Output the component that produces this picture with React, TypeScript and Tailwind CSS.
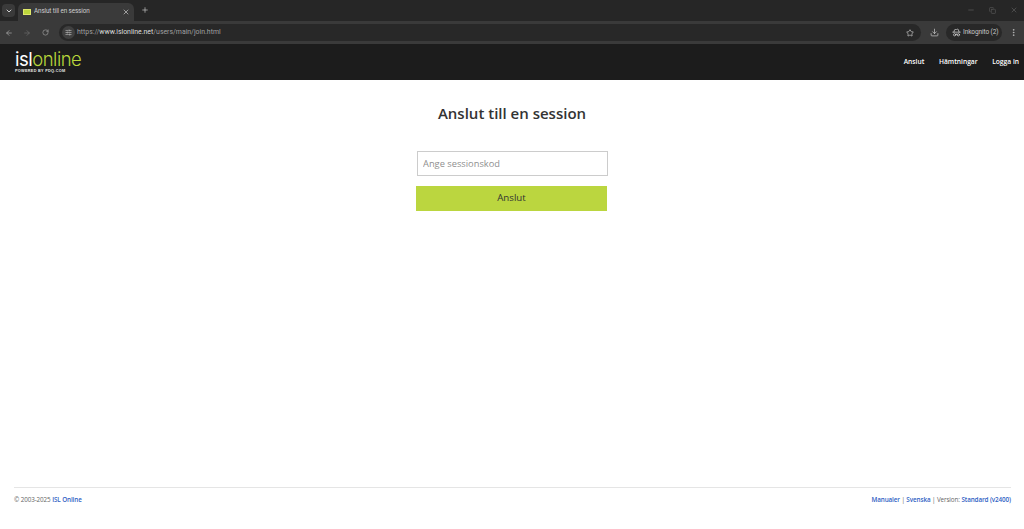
import React from 'react';
import { ArrowLeft, ArrowRight, RotateCw, ChevronDown, X, Plus, SlidersHorizontal, Star, Download, EllipsisVertical, Minus, Copy, HatGlasses } from 'lucide-react';

const BrowserChrome = () => (
  <div className="font-['Roboto','Liberation_Sans',sans-serif]">
    {/* Tab strip */}
    <div className="h-[21px] bg-[#262626] flex items-end">
      <div className="self-start mt-[4px] ml-[2px] w-[13px] h-[13px] rounded bg-[#3a3a3a] flex items-center justify-center">
        <ChevronDown size={8} strokeWidth={3} className="text-[#d0d0d0]" />
      </div>
      <div className="ml-[3px] w-[116px] h-[18px] bg-[#3a3a3a] rounded-t-md flex items-center pl-[5px] pr-[4px]">
        <div className="w-[8px] h-[6px] bg-[#bcd63c] border border-[#dfe86a]" />
        <span className="ml-[3px] text-[6.3px] tracking-[-0.1px] text-[#cfcfcf] flex-1 truncate">Anslut till en session</span>
        <X size={8} strokeWidth={2} className="text-[#d0d0d0]" />
      </div>
      <Plus size={8} strokeWidth={2} className="self-start mt-[6px] ml-[7px] text-[#c8c8c8]" />
      <div className="flex-1" />
      <div className="self-start mt-[6px] flex items-center gap-[14px] pr-[6px] text-[#5e5e5e]">
        <Minus size={8} />
        <Copy size={7} />
        <X size={8} />
      </div>
    </div>
    {/* Address bar */}
    <div className="h-[23px] bg-[#3a3a3a] flex items-center pl-[5px]">
      <ArrowLeft size={8} strokeWidth={2} className="text-[#b0b0b0]" />
      <ArrowRight size={8} strokeWidth={2} className="ml-[10px] text-[#6e6e6e]" />
      <RotateCw size={7} strokeWidth={2} className="ml-[11px] text-[#b0b0b0]" />
      <div className="ml-[10px] w-[862px] h-[17px] rounded-full bg-[#282828] flex items-center pl-[3px] pr-[7px]">
        <div className="w-[13px] h-[13px] rounded-full bg-[#404040] flex items-center justify-center">
          <SlidersHorizontal size={7} strokeWidth={2} className="text-[#c8c8c8]" />
        </div>
        <span className="ml-[2px] text-[6.9px] text-[#a0a0a0] flex-1">
          https://<span className="text-[#dedede]">www.islonline.net</span>/users/main/join.html
        </span>
        <Star size={8} strokeWidth={2} className="text-[#d0d0d0]" />
      </div>
      <Download size={9} strokeWidth={2} className="ml-[9px] text-[#c0c0c0]" />
      <div className="ml-[7px] w-[56px] h-[17px] rounded-full bg-[#282828] flex items-center pl-[6px]">
        <HatGlasses size={9} className="text-[#d0d0d0]" />
        <span className="ml-[2px] text-[6.5px] tracking-[-0.1px] text-[#c8c8c8]">Inkognito (2)</span>
      </div>
      <EllipsisVertical size={9} strokeWidth={2} className="ml-[7px] text-[#c0c0c0]" />
    </div>
  </div>
);

const Logo = () => (
  <div className="leading-none">
    <div className="font-['Inter','Liberation_Sans',sans-serif] text-[18.5px] h-[19px] tracking-[-0.5px] flex items-center">
      <span className="text-white font-normal">isl</span>
      <span className="text-[#b9d63b] font-light">online</span>
    </div>
    <div className="font-['Liberation_Sans',sans-serif] text-[3.8px] font-bold text-[#e8e8e8] tracking-[0.3px] mt-[1px]">POWERED BY PDQ.COM</div>
  </div>
);

export default function App() {
  return (
    <div className="h-[529px] flex flex-col bg-white font-['Open_Sans','Liberation_Sans',sans-serif]">
      <BrowserChrome />

      {/* Site header */}
      <header className="h-[36px] bg-[#1c1c1c] flex items-center justify-between pl-[15px] pr-[5px]">
        <Logo />
        <nav className="flex items-center gap-[14.5px] text-[6.7px] font-semibold text-white">
          <a>Anslut</a>
          <a>Hämtningar</a>
          <a>Logga in</a>
        </nav>
      </header>

      {/* Join form */}
      <main className="flex-1 flex flex-col items-center">
        <h1 className="mt-[21px] text-[15px] leading-[24px] font-semibold text-[#333333]">Anslut till en session</h1>
        <div className="mt-[26px] w-[192px] flex flex-col">
          <input
            placeholder="Ange sessionskod"
            className="ml-[1px] w-[191px] h-[25px] border border-[#cccccc] px-[5px] text-[9.3px] outline-none placeholder:text-[#8f8f8f]"
          />
          <button className="mt-[10px] w-[191px] h-[25px] bg-[#bbd63f] text-[9.7px] font-medium text-[#333333]">Anslut</button>
        </div>
      </main>

      {/* Footer */}
      <footer className="ml-[14px] mr-[13px] h-[42px] border-t border-[#e5e5e5] pt-[7px] flex justify-between text-[6.3px] tracking-[-0.1px] leading-[10px] text-[#666666]">
        <div>
          © 2003-2025 <a className="font-semibold text-[#2f62c4]">ISL Online</a>
        </div>
        <div>
          <a className="font-semibold text-[#2f62c4]">Manualer</a> | <a className="font-semibold text-[#2f62c4]">Svenska</a> | Version:{' '}
          <a className="font-semibold text-[#2f62c4]">Standard (v2400)</a>
        </div>
      </footer>
    </div>
  );
}
